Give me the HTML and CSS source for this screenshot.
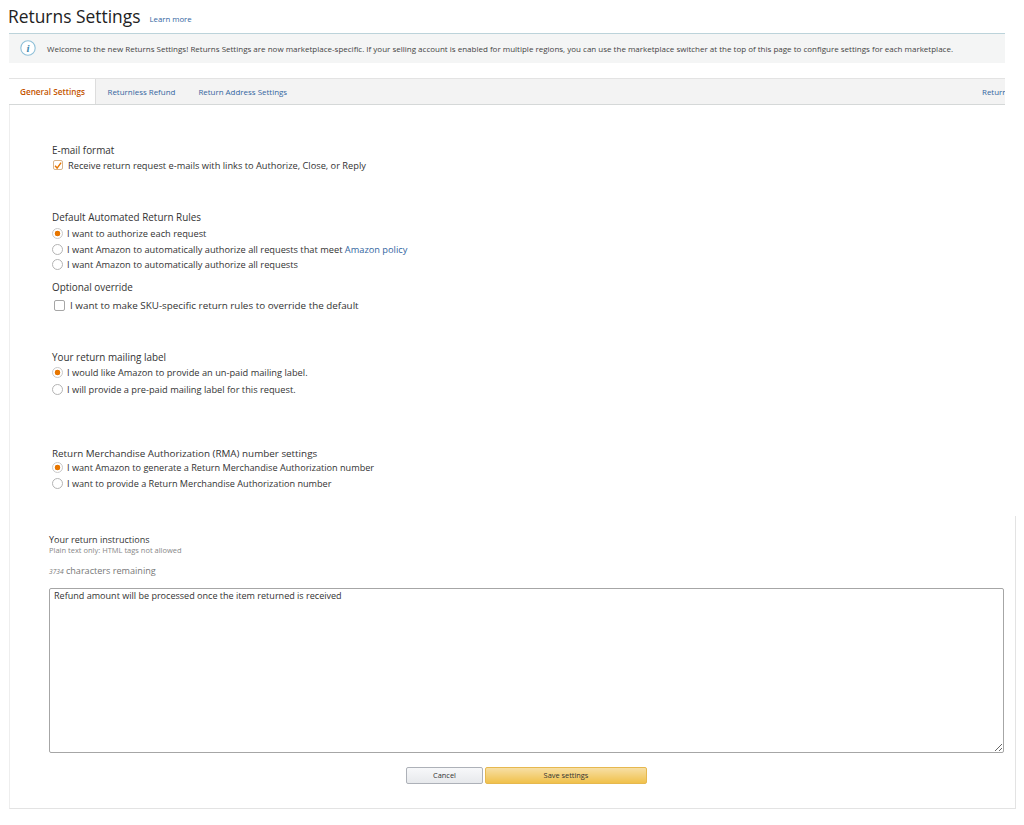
FILE: index.html
```html
<!DOCTYPE html>
<html lang="en">
<head>
<meta charset="utf-8">
<title>Returns Settings</title>
<link rel="stylesheet" href="styles.css">
</head>
<body>
<div class="page">
  <header class="head">
    <h1>Returns Settings</h1>
    <a class="learn" href="#">Learn more</a>
  </header>
  <div class="banner">
    <svg class="info" width="16" height="16" viewBox="0 0 16 16"><circle cx="8" cy="8" r="7.2" fill="#fff" stroke="#8fc0d8" stroke-width="1.1"/><text x="8" y="12" text-anchor="middle" class="info-i">i</text></svg>
    <p>Welcome to the new Returns Settings! Returns Settings are now marketplace-specific. If your selling account is enabled for multiple regions, you can use the marketplace switcher at the top of this page to configure settings for each marketplace.</p>
  </div>
  <nav class="tabs">
    <a class="tab active" href="#">General Settings</a>
    <a class="tab" href="#">Returnless Refund</a>
    <a class="tab" href="#">Return Address Settings</a>
    <a class="tab-end" href="#">Return</a>
  </nav>
  <main class="panel">
    <div class="settings">
      <section class="group email">
        <h2>E-mail format</h2>
        <label class="row check-row"><span class="check on"><svg width="9" height="9" viewBox="0 0 9 9"><path d="M1.2 4.8 3.5 7.4 8 1.2" fill="none" stroke="#e77600" stroke-width="1.6"/></svg></span>Receive return request e-mails with links to Authorize, Close, or Reply</label>
      </section>
      <section class="group rules">
        <h2>Default Automated Return Rules</h2>
        <label class="row"><span class="radio on"></span>I want to authorize each request</label>
        <label class="row"><span class="radio"></span><span>I want Amazon to automatically authorize all requests that meet <a href="#">Amazon policy</a></span></label>
        <label class="row"><span class="radio"></span>I want Amazon to automatically authorize all requests</label>
      </section>
      <section class="group override">
        <h2>Optional override</h2>
        <label class="row big-check"><span class="check"></span>I want to make SKU-specific return rules to override the default</label>
      </section>
      <section class="group mailing">
        <h2>Your return mailing label</h2>
        <label class="row"><span class="radio on"></span>I would like Amazon to provide an un-paid mailing label.</label>
        <label class="row"><span class="radio"></span>I will provide a pre-paid mailing label for this request.</label>
      </section>
      <section class="group rma">
        <h2>Return Merchandise Authorization (RMA) number settings</h2>
        <label class="row"><span class="radio on"></span>I want Amazon to generate a Return Merchandise Authorization number</label>
        <label class="row"><span class="radio"></span>I want to provide a Return Merchandise Authorization number</label>
      </section>
    </div>
    <section class="instructions">
      <h3>Your return instructions</h3>
      <p class="hint">Plain text only: HTML tags not allowed</p>
      <p class="count"><span class="num">3734</span> characters remaining</p>
      <textarea class="box">Refund amount will be processed once the item returned is received</textarea>
      <div class="actions">
        <button class="btn cancel" type="button">Cancel</button>
        <button class="btn save" type="button">Save settings</button>
      </div>
    </section>
  </main>
</div>
</body>
</html>
```
FILE: styles.css
```css
* { box-sizing: border-box; }
html, body { margin: 0; padding: 0; background: #fff; }
body {
  font-family: "Open Sans", "Noto Sans", "Liberation Sans", sans-serif;
  color: #333;
  font-size: 9.25px;
}
a { color: #33669f; text-decoration: none; }
.page { width: 1024px; height: 825px; padding-left: 9px; overflow: hidden; }
.head { display: flex; align-items: flex-start; gap: 9px; height: 33px; padding-top: 3px; margin-left: -1px; }
h1 { margin: 0; font-size: 17.4px; font-weight: 400; color: #222; line-height: 26px; }
.learn { font-size: 7.8px; margin-top: 11px; }
.banner {
  width: 996px; height: 30px; background: #f4f5f5; border-top: 1px solid #bcd3da;
  display: flex; align-items: center; padding: 0 0 1px 11px; gap: 11px;
}
.banner p { margin: 0; font-size: 8px; color: #444; white-space: nowrap; }
.info { flex: none; }
.info-i { font: italic bold 11px "Liberation Serif", serif; fill: #3f88ad; }
.tabs {
  width: 996px; height: 27px; margin-top: 15px; background: #f3f3f3;
  border-top: 1px solid #e3e3e3; border-bottom: 1px solid #d5d8d8;
  display: flex; align-items: center; position: relative; overflow: hidden; font-size: 7.95px;
}
.tab { padding: 0 11.5px; line-height: 26px; white-space: nowrap; }
.tab.active {
  width: 87px; padding: 0 0 0 11px; margin-top: -1px; height: 27px; line-height: 26px; background: #fff;
  border-top: 1px solid #e9a25a; border-right: 1px solid #ddd; color: #c45500; font-weight: 600; font-size: 8.2px;
}
.tab-end { margin-left: auto; margin-right: -9px; width: 32px; overflow: hidden; white-space: nowrap; }
.panel { width: 1007px; height: 704px; border-left: 1px solid #eee; border-bottom: 1px solid #e3e3e3; display: flex; flex-direction: column; }
.settings { height: 411px; padding-left: 42px; }
.group h2 { margin: 0 0 2px; font-size: 9.9px; font-weight: 400; color: #333; line-height: 12px; }
.row { display: flex; align-items: center; height: 15.5px; white-space: nowrap; color: #333; }
.email { padding-top: 39px; }
.email .row { height: 14px; }
.rules { padding-top: 39px; }
.rules h2 { margin-bottom: 3px; }
.override { padding-top: 8px; }
.override .row { margin-top: 4px; height: 17px; font-size: 9.85px; }
.mailing { padding-top: 37px; }
.mailing .row { height: 16.5px; }
.rma { padding-top: 48px; }
.rma h2 { margin-bottom: 0; font-size: 9.85px; line-height: 14px; }
.rma .row { height: 16px; font-size: 9.15px; }
.radio {
  flex: none; width: 11px; height: 11px; border-radius: 50%; border: 1px solid #b4b4b4;
  margin-right: 4px; background: #fff;
}
.radio.on { border-color: #c9c9c9; background: radial-gradient(circle, #e77600 0 2.6px, #fff 3.1px); }
.check {
  flex: none; width: 10px; height: 10px; border: 1px solid #a6a6a6; border-radius: 2px; margin: 0 6px 0 1px;
  display: flex; align-items: center; justify-content: center; background: #fff;
}
.check.on { border-color: #d8b48c; margin-right: 5px; }
.big-check .check { width: 11px; height: 11px; margin: 0 5px 0 2px; }
.instructions { flex: 1; padding: 18px 10px 0 39px; border-right: 1px solid #e3e3e3; }
h3 { margin: 0; font-size: 9px; font-weight: 400; line-height: 11px; color: #333; }
.hint { margin: 0; font-size: 7.5px; line-height: 10px; color: #888; }
.count { margin: 10px 0 0; font-size: 9.1px; line-height: 12px; color: #777; }
.num { font-size: 6.6px; font-style: italic; }
.box {
  display: block; width: 955px; height: 165px; margin-top: 10px; padding: 0 4px;
  border: 1px solid #a6a6a6; border-radius: 2px; font: 9.05px/14px "Open Sans", sans-serif; color: #333; outline: none;
}
.actions { display: flex; justify-content: flex-start; gap: 2px; margin-top: 14px; padding-left: 357px; }
.btn { height: 17px; border-radius: 2px; font-family: "Open Sans", sans-serif; font-size: 7.4px; padding: 0 0 2px; color: #333; }
.cancel { width: 77px; background: linear-gradient(#f7f8fa, #e7e9ec); border: 1px solid #adb1b8; }
.save { width: 162px; background: linear-gradient(#f7dfa5, #f0c14b); border: 1px solid #e6b84f; }
```
